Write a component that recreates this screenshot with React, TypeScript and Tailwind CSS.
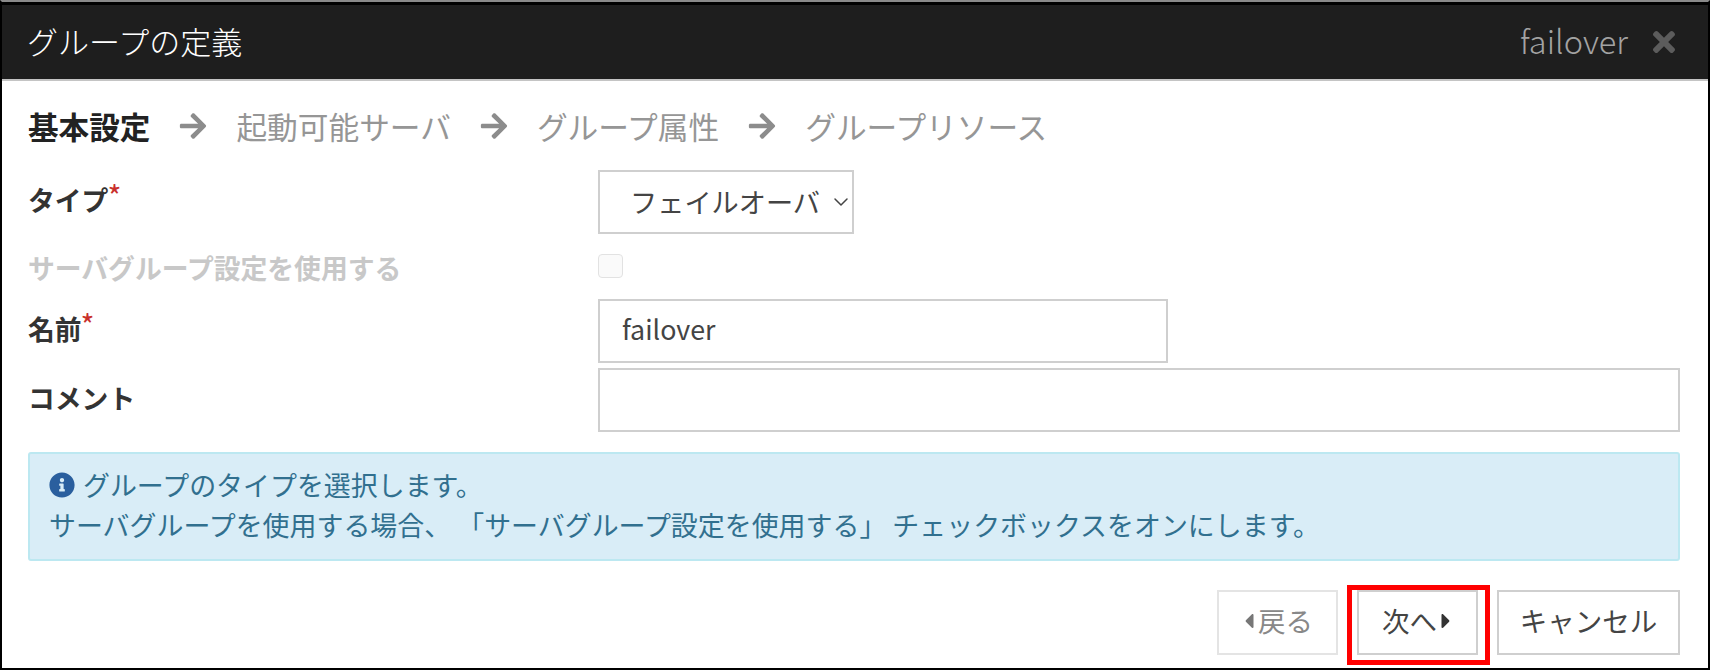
import { ChevronDown } from 'lucide-react'
import { FaArrowRight, FaCaretLeft, FaCaretRight, FaInfoCircle, FaTimes } from 'react-icons/fa'

const FONT = "font-['Noto_Sans_CJK_JP','Noto_Sans',sans-serif]"
const STEPS = ['起動可能サーバ', 'グループ属性', 'グループリソース']

function Required() {
  return <span className="relative -top-[3px] -ml-[1px] text-[30px] font-normal leading-[0] text-[#c9302c]">*</span>
}

function FormRow({ label, required, disabled, height, gap, labelClass = '', children }: {
  label: string
  required?: boolean
  disabled?: boolean
  height: number
  gap: string
  labelClass?: string
  children: React.ReactNode
}) {
  return (
    <div className={`flex items-center ${gap}`} style={{ height }}>
      <label className={`w-[570px] shrink-0 text-[26.8px] font-bold leading-none ${labelClass} ${disabled ? 'text-[#c8c8c8]' : 'text-[#333333]'}`}>
        {label}
        {required && <Required />}
      </label>
      {children}
    </div>
  )
}

export default function App() {
  return (
    <div className={`${FONT} flex h-[670px] w-[1710px] flex-col border-x-2 border-b-2 border-t-[2px] border-black border-t-[#8a8a8a] bg-white text-[#333333]`}>
      <header className="flex h-[79px] shrink-0 items-center justify-between border-t-[3px] border-b-2 border-black border-b-[#c4c4c4] bg-[#1e1e1e] pl-[25px] pr-[30px]">
        <h1 className="pb-[4px] text-[31px] font-light leading-none text-white">グループの定義</h1>
        <div className="flex items-center gap-[22px]">
          <span className="pb-[3px] text-[32.5px] font-light leading-none text-[#a3a3a3]">failover</span>
          <FaTimes className="h-[32px] w-[28px] text-[#5c5c5c]" />
        </div>
      </header>

      <main className="flex flex-1 flex-col pl-[26px] pr-[28px]">
        <nav className="mt-[27px] flex h-[36px] items-center text-[30.7px] leading-none text-[#969696]">
          <b className="text-[30.6px] font-bold text-[#222222]">基本設定</b>
          {STEPS.map((step) => (
            <span key={step} className="flex items-center">
              <FaArrowRight className="mx-[28px] h-[30px] w-[30px] text-[#8c8c8c]" />
              {step}
            </span>
          ))}
        </nav>

        <form className="mt-[26px]">
          <FormRow label="タイプ" required height={64} gap="" labelClass="pb-[4px]">
            <div className="flex h-full w-[256px] items-center border-2 border-[#cfcfcf] pl-[30px]">
              <span className="whitespace-nowrap text-[27.2px] leading-none text-[#444444]">フェイルオーバ</span>
              <ChevronDown className="ml-[9px] h-[24px] w-[24px] shrink-0 text-[#444444]" strokeWidth={1.5} />
            </div>
          </FormRow>
          <FormRow label="サーバグループ設定を使用する" disabled height={24} gap="mt-[20px]" labelClass="pt-[5px]">
            <span className="h-[24px] w-[25px] rounded-[4px] border border-[#e2e2e2] bg-[#fafafa]" />
          </FormRow>
          <FormRow label="名前" required height={64} gap="mt-[21px]" labelClass="pb-[3px]">
            <div className="flex h-full w-[570px] items-center border-2 border-[#cfcfcf] pb-[3px] pl-[22px] text-[26.8px] leading-none text-[#444444]">
              failover
            </div>
          </FormRow>
          <FormRow label="コメント" height={64} gap="mt-[5px]" labelClass="pb-[3px]">
            <div className="h-full flex-1 border-2 border-[#cfcfcf]" />
          </FormRow>
        </form>

        <div className="mt-[20px] flex h-[109px] flex-col justify-center rounded-[3px] border-2 border-[#bce8f1] bg-[#d9edf7] pb-[3px] pl-[19px] text-[26.95px] leading-[40px] text-[#31708f]">
          <p className="flex items-center gap-[8px]">
            <FaInfoCircle className="h-[26px] w-[26px] text-[#2a5f9e]" />
            グループのタイプを選択します。
          </p>
          <p>サーバグループを使用する場合、 「サーバグループ設定を使用する」 チェックボックスをオンにします。</p>
        </div>

        <div className="mt-[29px] flex justify-end gap-[19px] text-[27.5px] leading-none">
          <button type="button" className="flex h-[65px] w-[121px] items-center justify-center border-2 border-[#e4e4e4] pb-[3px] text-[#888888]">
            <FaCaretLeft className="mr-[2px] h-[24px] w-[14px] text-[#777777]" />
            戻る
          </button>
          <div className="relative">
            <button type="button" className="flex h-[65px] w-[121px] items-center justify-center border-2 border-[#cfcfcf] pb-[3px] text-[#444444]">
              次へ
              <FaCaretRight className="ml-[2px] h-[24px] w-[14px] text-[#333333]" />
            </button>
            <span className="absolute -bottom-[10px] -left-[10px] -right-[12px] -top-[5px] border-[5px] border-[#ff0000]" />
          </div>
          <button type="button" className="flex h-[65px] w-[183px] items-center justify-center border-2 border-[#cfcfcf] pb-[3px] text-[#444444]">
            キャンセル
          </button>
        </div>
      </main>
    </div>
  )
}
